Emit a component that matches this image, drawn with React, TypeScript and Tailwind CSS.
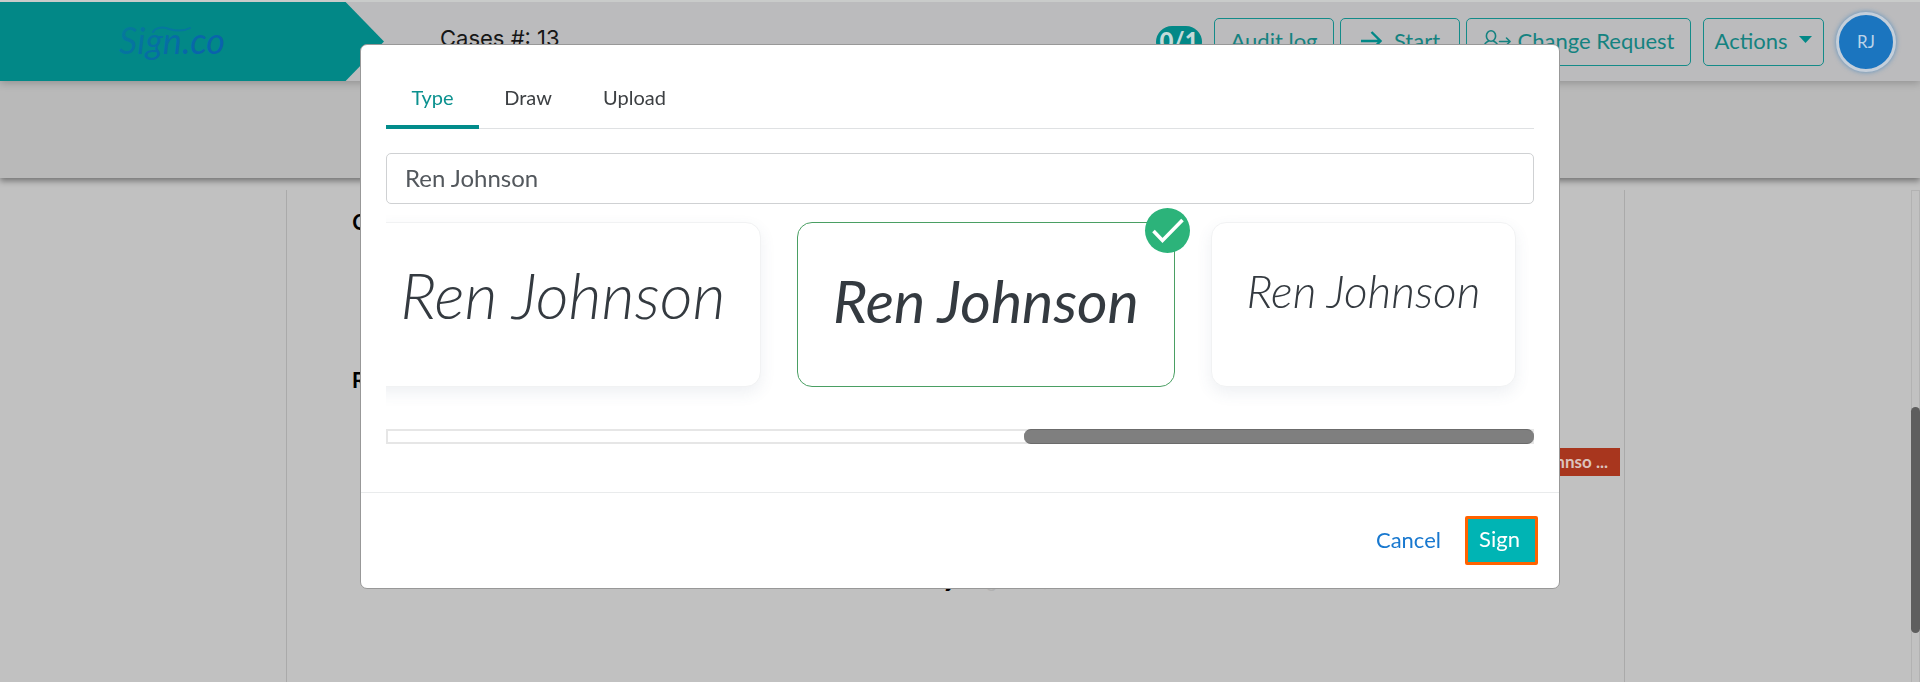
import React, { useState } from "react";

const HEADER_BUTTON =
  "flex h-12 shrink-0 items-center justify-center rounded-[5px] border border-[#148b89] px-3 pb-0.5 text-[22px] leading-8 text-[#148280] whitespace-nowrap";

function PersonArrowIcon() {
  return (
    <svg width="29" height="24" viewBox="0 0 29 24" fill="none" stroke="currentColor" strokeWidth="1.6" strokeLinecap="round" strokeLinejoin="round" aria-hidden="true">
      <ellipse cx="8" cy="7" rx="4.6" ry="5.3" />
      <path d="M5.6 12C3 13 1.2 15 1 18.4h12.4" />
      <path d="M10.4 12c1.7.7 3 1.8 3.8 3.2" />
      <path d="M16.5 12.5H27M23.5 9l3.6 3.5-3.6 3.5" />
    </svg>
  );
}

function Logo() {
  return (
    <svg width="124" height="60" viewBox="0 0 124 60" role="img" aria-label="Sign.co">
      <defs>
        <linearGradient id="logo-ink" x1="0" y1="0" x2="1" y2="0.5">
          <stop offset="0" stopColor="#057d98" />
          <stop offset="0.5" stopColor="#066fa3" />
          <stop offset="1" stopColor="#0a62ac" />
        </linearGradient>
      </defs>
      <text x="4" y="42" fontSize="36" fontStyle="italic" fontFamily="Lato, sans-serif" fill="url(#logo-ink)">
        Sign.co
      </text>
      <path d="M38 20c2-4 9-6 16-3 7 2 14 3 21-1" fill="none" stroke="#0676a0" strokeWidth="2" strokeLinecap="round" />
    </svg>
  );
}

function Header() {
  return (
    <header className="relative z-20 flex h-[81px] shrink-0 items-stretch justify-between border-t-2 border-[#c9cbca] bg-[#bbbbbd] shadow-[0_2px_8px_rgba(0,0,0,0.22)]">
      <div className="flex items-center">
        <div className="flex h-full w-[384px] shrink-0 items-center bg-[#028887] pl-[115px] [clip-path:polygon(0_0,90%_0,100%_50%,90%_100%,0_100%)]">
          <Logo />
        </div>
        <h1 className="ml-14 pb-2 font-['Inter',sans-serif] text-[22px] leading-8 whitespace-nowrap text-[#161616]">Cases #: 13</h1>
      </div>
      <div className="flex items-center pr-6">
        <span className="mr-3 flex h-8 w-[46px] items-center justify-center rounded-2xl bg-[#028887] pb-0.5 text-[24px] font-black text-[#c4dad9]">0/1</span>
        <button type="button" className={`${HEADER_BUTTON} mr-1.5 w-[120px]`}>Audit log</button>
        <button type="button" className={`${HEADER_BUTTON} mr-1.5 w-[120px] gap-3`}>
          <svg width="22" height="22" viewBox="0 0 22 22" fill="none" stroke="#028887" strokeWidth="2.4" aria-hidden="true">
            <path d="M1 11h19M11.5 2l9 9-9 9" />
          </svg>
          Start
        </button>
        <button type="button" className={`${HEADER_BUTTON} mr-3 w-[225px] gap-1.5`}>
          <PersonArrowIcon />
          Change Request
        </button>
        <button type="button" className={`${HEADER_BUTTON} mr-3 w-[121px] gap-3`}>
          Actions
          <svg width="13" height="7" viewBox="0 0 13 7" fill="#028887" className="mb-0.5 shrink-0" aria-hidden="true">
            <path d="M0 0h13L6.500 7z" />
          </svg>
        </button>
        <button
          type="button"
          className="flex size-[60px] shrink-0 items-center justify-center rounded-full border-3 border-[#c5cfda] bg-[#1b75bf] text-[17px] text-[#bcd3e8] shadow-[0_0_5px_rgba(27,117,191,0.6)]"
        >
          RJ
        </button>
      </div>
    </header>
  );
}

function DocumentPage() {
  return (
    <main className="flex min-h-0 flex-1 pt-3">
      <div className="flex-1 px-[286px]">
        <article className="flex h-full flex-col border-x border-[#aaaaaa] px-1 pt-4 font-['Inter',sans-serif] text-black">
          <h2 className="ml-[61px] text-[22px] leading-8 font-semibold">Case</h2>
          <h2 className="mt-[126px] ml-[61px] text-[22px] leading-8 font-semibold">Recipients</h2>
          <div className="mt-[52px] flex h-7 items-center self-end bg-[#a8361e] px-3 font-['Lato',sans-serif] text-[17px] font-bold text-[#dcc3bd]">
            Ren Johnso ...
          </div>
          <p className="mt-[93px] flex justify-center gap-2 pr-6 text-[18px] leading-6">
            <span className="font-bold">Generated by</span>
            <span className="text-[#b2b2b2]">(Signable)</span>
          </p>
        </article>
      </div>
      <div className="w-[9px] shrink-0 border border-b-0 border-[#b2b2b2]">
        <div className="mt-[216px] -mx-px h-[226px] rounded-full bg-[#5e5e5e]" />
      </div>
    </main>
  );
}

type Style = { id: string; card: string; text: string };

const STYLES: Style[] = [
  { id: "flowing", card: "w-[396px]", text: "text-[64px] font-light italic pb-5" },
  { id: "upright", card: "w-[378px]", text: "text-[59px] font-normal italic pb-2" },
  { id: "compact", card: "w-[305px]", text: "text-[46px] font-light italic pb-7" },
];

function SignatureStyles({ name }: { name: string }) {
  const [selected, setSelected] = useState("upright");
  return (
    <div role="radiogroup" aria-label="Signature style" className="flex justify-end gap-9 overflow-hidden pt-[18px] pr-[18px] pb-[42px]">
      {STYLES.map((s) => (
        <label
          key={s.id}
          className={`relative flex h-[165px] shrink-0 cursor-pointer items-center justify-center rounded-[15px] border bg-white whitespace-nowrap text-[#343a40] ${s.card} ${
            selected === s.id ? "border-[#4a9f63]" : "border-[#f1f2f3] shadow-[0_6px_16px_rgba(70,90,120,0.09)]"
          }`}
        >
          <input type="radio" name="signature-style" value={s.id} checked={selected === s.id} onChange={() => setSelected(s.id)} className="sr-only" />
          <span className={`leading-none ${s.text}`}>{name}</span>
          {selected === s.id && (
            <span className="absolute -top-[15px] -right-4 flex size-[45px] items-center justify-center rounded-full bg-[#2cb37a]">
              <svg width="32" height="26" viewBox="0 0 32 26" fill="none" stroke="#ffffff" strokeWidth="3.6" aria-hidden="true">
                <path d="M1.500 13l9 9.500L30.500 2" />
              </svg>
            </span>
          )}
        </label>
      ))}
    </div>
  );
}

const TAB = "-mb-px h-[60px] border-b-4";

function SignDialog() {
  const [name, setName] = useState("Ren Johnson");
  return (
    <div className="fixed inset-0 z-30 flex items-start justify-center pt-11">
      <section role="dialog" aria-modal="true" aria-label="Sign" className="w-[1200px] max-w-full rounded-[7px] border border-[#989898] bg-white">
        <div className="px-[25px] pb-12">
          <div role="tablist" className="flex h-[84px] items-end border-b border-[#dfe1e3] text-[20px] leading-7 text-[#3d4043]">
            <button type="button" role="tab" aria-selected="true" className={`${TAB} w-[93px] border-[#028c8b] text-[#0b918f]`}>
              Type
            </button>
            <button type="button" role="tab" aria-selected="false" className={`${TAB} w-[98px] border-transparent`}>
              Draw
            </button>
            <button type="button" role="tab" aria-selected="false" className={`${TAB} w-[115px] border-transparent`}>
              Upload
            </button>
          </div>
          <input
            type="text"
            aria-label="Signature name"
            value={name}
            onChange={(e) => setName(e.target.value)}
            className="mt-6 block h-[51px] w-full rounded-[5px] border border-[#cfd1d3] px-[18px] pb-0.5 text-[24px] text-[#53585d] outline-none"
          />
          <SignatureStyles name={name} />
          <div className="flex h-[15px] justify-end border-2 border-[#e6e6e6]">
            <div className="-m-0.5 w-[510px] rounded-[7px] border-y border-[#6b6b6b] bg-[#7f7f7f]" />
          </div>
        </div>
        <footer className="flex h-[96px] items-center justify-end gap-6 border-t border-[#e9ebec] pr-[21px] text-[22px]">
          <button type="button" className="pb-0.5 text-[#1878cf]">Cancel</button>
          <button type="button" className="h-[49px] w-[73px] rounded-xs border-3 border-[#ff6200] bg-[#00b4b4] pr-1 pb-1 text-white">
            Sign
          </button>
        </footer>
      </section>
    </div>
  );
}

export default function App() {
  return (
    <div className="flex h-screen flex-col overflow-hidden bg-[#c1c1c1] font-['Lato',sans-serif]">
      <Header />
      <div className="relative z-10 h-[97px] shrink-0 bg-[#b9b9b9] shadow-[0_3px_6px_rgba(0,0,0,0.4)]" />
      <DocumentPage />
      <SignDialog />
    </div>
  );
}
